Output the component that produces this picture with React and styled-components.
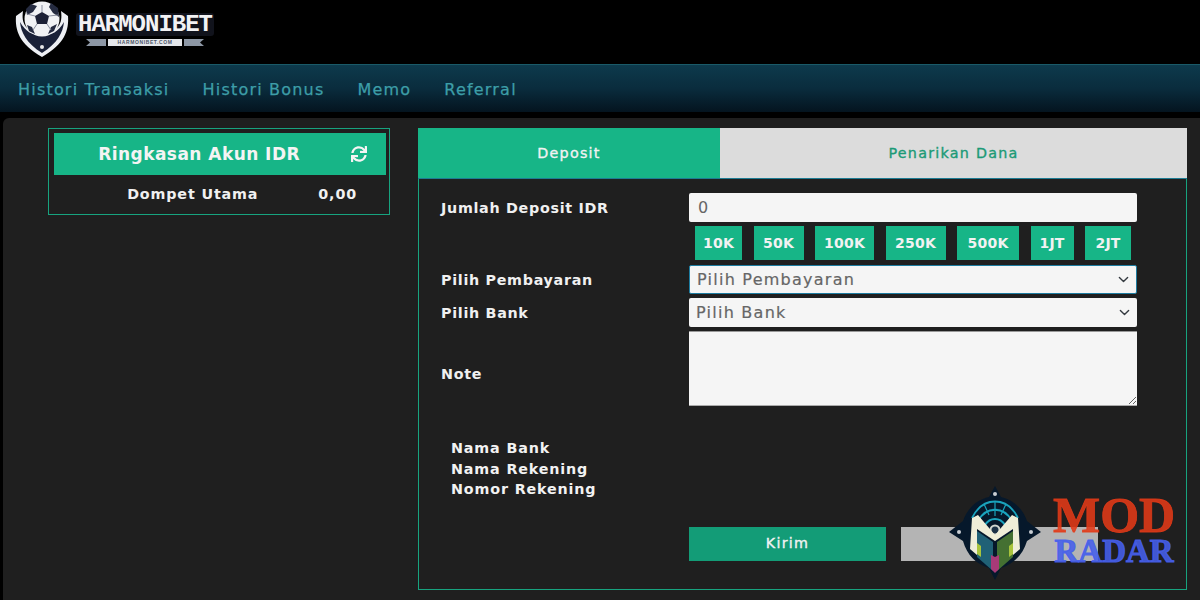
import React from "react";
import styled, { createGlobalStyle } from "styled-components";
import { FaSync } from "react-icons/fa";

const Global = createGlobalStyle`
  html, body { margin: 0; padding: 0; background: #000; height: 600px; overflow: hidden; }
  * { box-sizing: border-box; }
  body { font-family: "DejaVu Sans", Inter, sans-serif; color: #fff; }
`;

const Page = styled.div`
  position: relative;
  width: 1200px;
  height: 600px;
  overflow: hidden;
  background: #000;
`;
const Header = styled.header`
  height: 64px;
  padding-left: 14px;
  display: flex;
  align-items: flex-start;
  gap: 6px;
  background: #000;
`;
const WordBlock = styled.div`
  margin-top: 13px;
  display: flex;
  flex-direction: column;
  align-items: center;
`;
const Word = styled.div`
  font-family: "Liberation Mono", monospace;
  font-weight: 700;
  font-size: 24px;
  line-height: 23px;
  letter-spacing: -1px;
  color: #f2f2f4;
  background: #11131c;
  padding: 0 2px;
  border-radius: 3px;
`;
const Ribbon = styled.div`
  display: flex;
  align-items: center;
  margin-top: 1px;
`;
const RibbonLabel = styled.div`
  width: 74px;
  height: 7px;
  background: #e4e6ea;
  color: #4b5568;
  font-family: "Liberation Sans", sans-serif;
  font-size: 5px;
  font-weight: 700;
  line-height: 7px;
  letter-spacing: 0.6px;
  text-align: center;
`;
const Nav = styled.nav`
  height: 48px;
  padding: 0 0 0 18px;
  display: flex;
  align-items: center;
  gap: 33px;
  border-top: 1px solid #1a5a68;
  background: linear-gradient(180deg, #0d3a4c 0%, #0a2c3d 50%, #04141f 100%);
`;
const NavLink = styled.a`
  font-size: 16px;
  letter-spacing: 1.2px;
  -webkit-text-stroke: 0.25px #3d9ea8;
  color: #3d9ea8;
  padding-top: 2px;
`;
const Main = styled.main`
  margin: 6px 0 0 3px;
  height: 482px;
  padding: 10px 0 0 45px;
  display: flex;
  align-items: flex-start;
  gap: 28px;
  background: #1f1f1f;
  border-radius: 6px 0 0 0;
`;
const Summary = styled.section`
  width: 342px;
  height: 87px;
  flex: none;
  padding: 4px 3px 0 5px;
  border: 1px solid #17a37f;
`;
const SummaryHead = styled.div`
  height: 42px;
  display: flex;
  align-items: center;
  justify-content: flex-end;
  padding-right: 19px;
  gap: 51px;
  background: #17b587;
  color: #f4f4f4;
`;
const SummaryTitle = styled.h3`
  margin: 0;
  font-size: 17px;
  font-weight: 700;
  letter-spacing: 0.45px;
`;
const SummaryRow = styled.div`
  height: 38px;
  display: flex;
  align-items: center;
  justify-content: flex-end;
  padding-right: 29px;
  gap: 60px;
  font-size: 14.3px;
  font-weight: 700;
  letter-spacing: 0.85px;
  color: #f0f0f0;
`;
const Deposit = styled.section`
  width: 769px;
  flex: none;
`;
const Tabs = styled.div`
  height: 51px;
  display: flex;
  border-bottom: 1px solid #1d7c93;
`;
const Tab = styled.div`
  flex: ${(p) => (p.$active ? "0 0 302px" : "1")};
  display: flex;
  align-items: center;
  justify-content: center;
  font-size: 14.3px;
  -webkit-text-stroke: 0.35px currentColor;
  letter-spacing: 1.25px;
  background: ${(p) => (p.$active ? "#17b587" : "#dcdcdc")};
  color: ${(p) => (p.$active ? "#f2f2f2" : "#1b9a76")};
`;
const Panel = styled.div`
  height: 411px;
  padding: 14px 0 0 22px;
  border: 1px solid #17a37f;
  border-top: 0;
`;
const Row = styled.div`
  display: grid;
  grid-template-columns: 248px 448px;
  align-items: center;
  margin-bottom: ${(p) => p.$mb || 4}px;
`;
const Label = styled.label`
  font-size: 14.3px;
  font-weight: 700;
  letter-spacing: 0.7px;
  color: #f0f0f0;
  padding-top: ${(p) => p.$pt || 1}px;
`;
const Field = styled.input`
  width: 100%;
  height: 29px;
  padding: 0 7px 0 9px;
  border: 0;
  border-radius: 2px;
  background: #f5f5f5;
  font-family: inherit;
  font-size: 16px;
  letter-spacing: 0.2px;
  color: #666;
  outline: none;
`;
const Chips = styled.div`
  grid-column: 2;
  display: flex;
  justify-content: space-between;
  padding: 0 6px;
`;
const Chip = styled.button`
  height: 34px;
  padding: 0;
  width: ${(p) => p.$w}px;
  border: 0;
  background: #17b587;
  color: #f2f2f2;
  font-family: inherit;
  font-size: 14px;
  font-weight: 700;
  letter-spacing: 0.2px;
`;
const Select = styled.select`
  width: 100%;
  height: 29px;
  padding: 0 28px 0 7px;
  border: ${(p) => (p.$focus ? "1px solid #1d7ca0" : "0")};
  border-radius: 2px;
  appearance: none;
  background-color: #f5f5f5;
  background-image: url("data:image/svg+xml,%3csvg xmlns='http://www.w3.org/2000/svg' viewBox='0 0 16 16'%3e%3cpath fill='none' stroke='%23343a40' stroke-linecap='round' stroke-linejoin='round' stroke-width='2' d='m2 5 6 6 6-6'/%3e%3c/svg%3e");
  background-repeat: no-repeat;
  background-position: right 5px center;
  background-size: 15px 11px;
  font-family: inherit;
  font-size: 16px;
  letter-spacing: 1.25px;
  -webkit-text-stroke: 0.2px #666;
  color: #666;
  outline: none;
`;
const Note = styled.textarea`
  width: 100%;
  height: 75px;
  display: block;
  border: 0;
  border-top: 1px solid #999;
  border-bottom: 1px solid #aaa;
  background: #f5f5f5;
  outline: none;
`;
const Info = styled.div`
  margin: 32px 0 0 10px;
  display: flex;
  flex-direction: column;
`;
const InfoLine = styled.div`
  height: 20.5px;
  line-height: 20.5px;
  font-size: 14.3px;
  font-weight: 700;
  letter-spacing: 0.85px;
  color: #f2f2f2;
`;
const Actions = styled.div`
  margin: 27px 0 0 248px;
  display: flex;
  gap: 15px;
`;
const Action = styled.button`
  width: 197px;
  height: 34px;
  border: 0;
  padding: 0 0 2px;
  background: ${(p) => (p.$muted ? "#b4b4b4" : "#139c77")};
  color: ${(p) => (p.$muted ? "#a8a8a8" : "#f2f2f2")};
  font-family: inherit;
  font-size: 14.3px;
  letter-spacing: 1.25px;
  -webkit-text-stroke: 0.35px currentColor;
`;
const Watermark = styled.div`
  position: absolute;
  left: 948px;
  top: 485px;
  display: flex;
  align-items: flex-start;
  pointer-events: none;
`;
const MarkText = styled.div`
  margin: 10px 0 0 11px;
  display: flex;
  flex-direction: column;
  align-items: center;
  font-family: "Liberation Serif", serif;
  font-weight: 700;
`;
const MarkMod = styled.div`
  font-size: 50px;
  line-height: 40px;
  -webkit-text-stroke: 0.8px currentColor;
  color: rgba(226, 58, 24, 0.88);
`;
const MarkRadar = styled.div`
  font-size: 33px;
  line-height: 32px;
  -webkit-text-stroke: 1.2px currentColor;
  color: rgba(70, 95, 235, 0.9);
`;

const LogoIcon = () => (
  <svg width="56" height="58" viewBox="0 0 56 58">
    <path d="M2 16 L9 11 C7 24 12 32 28 32 C44 32 49 24 47 11 L54 16 C55 30 51 44 28 57 C5 44 1 30 2 16 Z" fill="#eef0f4" />
    <path d="M6 22 C12 32 18 35 28 36 C38 35 44 32 50 22 C49 32 44 43 28 53 C12 43 7 32 6 22 Z" fill="#1a2138" />
    <circle cx="28" cy="47" r="2" fill="#e8e8e8" />
    <circle cx="28" cy="19" r="17.5" fill="#f1f2f4" />
    <path d="M28 12 L35 16 L33 24 L23 24 L21 16 Z" fill="#1d2135" />
    <path d="M37 3 L44 8 L45 17 L39 13 L35 7Z M17 4 L23 6 L19 12 L13 15 L12 9Z M13 25 L18 27 L21 34 L15 31Z M43 24 L37 27 L34 34 L40 31Z" fill="#252b40" />
    <path d="M28 12 V5 M21 16 L13 14 M35 16 L44 15 M23 24 L19 30 M33 24 L37 30" stroke="#8a8f9e" strokeWidth="1" />
  </svg>
);

const RibbonEnd = ({ flip }) => (
  <svg width="22" height="11" viewBox="0 0 22 11" style={{ transform: flip ? "scaleX(-1)" : "none" }}>
    <path d="M0 2 H20 V9 H0 L4 5.5Z" fill="#8d97a5" />
  </svg>
);

const RadarLogo = () => (
  <svg width="94" height="96" viewBox="0 0 94 96">
    <path d="M47 1 L53 12 C66 15 75 24 79 36 L93 47 L79 56 C75 70 65 79 53 83 L47 95 L41 83 C28 79 19 70 15 56 L1 47 L15 36 C19 24 28 15 41 12 Z" fill="#06182b" />
    <circle cx="47" cy="9" r="2" fill="#c9ced4" />
    <circle cx="11" cy="47" r="2" fill="#c9ced4" />
    <circle cx="83" cy="47" r="2" fill="#c9ced4" />
    <g fill="none" stroke="#1aa3bd" strokeWidth="1.8">
      <path d="M24 33 C35 11 59 11 70 33" />
      <path d="M30 36 C38 21 56 21 64 36" />
      <path d="M37 40 C42 32 52 32 57 40" />
      <path d="M47 16 V31 M36 19 L41 30 M58 19 L53 30" strokeWidth="1.2" />
    </g>
    <circle cx="47" cy="45" r="4.5" fill="#1c3247" stroke="#cfd4cf" strokeWidth="2" />
    <path d="M24 33 L30 30 L47 50 L64 30 L70 33 L72 64 L65 70 L65 44 L47 56 L29 44 L29 70 L22 64Z" fill="#efeed8" />
    <path d="M29 46 L45 57 V86 L29 72Z" fill="#24697e" opacity="0.9" />
    <path d="M65 46 L49 57 V86 L65 72Z" fill="#4b7a33" opacity="0.9" />
    <path d="M29 58 L33 61 V72 L29 69Z" fill="#a8c43c" />
    <path d="M61 61 L65 58 V69 L61 72Z" fill="#a8c43c" />
    <path d="M43 70 L47 72 L51 70 V84 L47 88 L43 84Z" fill="#a83a78" />
  </svg>
);

const chips = [
  ["10K", 47], ["50K", 50], ["100K", 59], ["250K", 60], ["500K", 62], ["1JT", 43], ["2JT", 46],
];

export default function App() {
  return (
    <Page>
      <Global />
      <Header>
        <LogoIcon />
        <WordBlock>
          <Word>HARMONIBET</Word>
          <Ribbon>
            <RibbonEnd />
            <RibbonLabel>HARMONIBET.COM</RibbonLabel>
            <RibbonEnd flip />
          </Ribbon>
        </WordBlock>
      </Header>
      <Nav>
        <NavLink>Histori Transaksi</NavLink>
        <NavLink>Histori Bonus</NavLink>
        <NavLink>Memo</NavLink>
        <NavLink>Referral</NavLink>
      </Nav>
      <Main>
        <Summary>
          <SummaryHead>
            <SummaryTitle>Ringkasan Akun IDR</SummaryTitle>
            <FaSync size={16} />
          </SummaryHead>
          <SummaryRow>
            <span>Dompet Utama</span>
            <span>0,00</span>
          </SummaryRow>
        </Summary>
        <Deposit>
          <Tabs>
            <Tab $active>Deposit</Tab>
            <Tab>Penarikan Dana</Tab>
          </Tabs>
          <Panel>
            <Row>
              <Label>Jumlah Deposit IDR</Label>
              <Field defaultValue="0" />
            </Row>
            <Row $mb={5}>
              <Chips>
                {chips.map(([t, w]) => (
                  <Chip key={t} $w={w}>{t}</Chip>
                ))}
              </Chips>
            </Row>
            <Row>
              <Label>Pilih Pembayaran</Label>
              <Select $focus defaultValue="a"><option value="a">Pilih Pembayaran</option></Select>
            </Row>
            <Row>
              <Label>Pilih Bank</Label>
              <Select defaultValue="a"><option value="a">Pilih Bank</option></Select>
            </Row>
            <Row>
              <Label $pt={10}>Note</Label>
              <Note />
            </Row>
            <Info>
              <InfoLine>Nama Bank</InfoLine>
              <InfoLine>Nama Rekening</InfoLine>
              <InfoLine>Nomor Rekening</InfoLine>
            </Info>
            <Actions>
              <Action>Kirim</Action>
              <Action $muted>Batal</Action>
            </Actions>
          </Panel>
        </Deposit>
      </Main>
      <Watermark>
        <RadarLogo />
        <MarkText>
          <MarkMod>MOD</MarkMod>
          <MarkRadar>RADAR</MarkRadar>
        </MarkText>
      </Watermark>
    </Page>
  );
}
